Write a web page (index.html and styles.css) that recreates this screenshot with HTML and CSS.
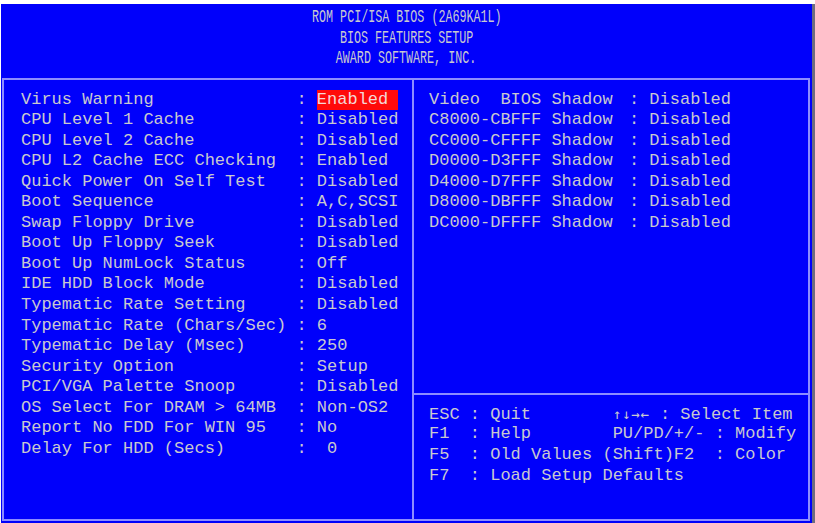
FILE: index.html
```html
<!DOCTYPE html>
<html>
<head>
<meta charset="utf-8">
<title>BIOS Features Setup</title>
<link rel="stylesheet" href="styles.css">
</head>
<body>
<div class="screen">
  <header class="title">
    <div class="tline"><span>ROM PCI/ISA BIOS (2A69KA1L)</span></div>
    <div class="tline"><span>BIOS FEATURES SETUP</span></div>
    <div class="tline"><span>AWARD SOFTWARE, INC.</span></div>
  </header>
  <div class="frame">
    <section class="left">
      <div class="row"><span class="lbl">Virus Warning</span><span class="sep">:</span><span class="val"><span class="hl">Enabled </span></span></div>
      <div class="row"><span class="lbl">CPU Level 1 Cache</span><span class="sep">:</span><span class="val">Disabled</span></div>
      <div class="row"><span class="lbl">CPU Level 2 Cache</span><span class="sep">:</span><span class="val">Disabled</span></div>
      <div class="row"><span class="lbl">CPU L2 Cache ECC Checking</span><span class="sep">:</span><span class="val">Enabled</span></div>
      <div class="row"><span class="lbl">Quick Power On Self Test</span><span class="sep">:</span><span class="val">Disabled</span></div>
      <div class="row"><span class="lbl">Boot Sequence</span><span class="sep">:</span><span class="val">A,C,SCSI</span></div>
      <div class="row"><span class="lbl">Swap Floppy Drive</span><span class="sep">:</span><span class="val">Disabled</span></div>
      <div class="row"><span class="lbl">Boot Up Floppy Seek</span><span class="sep">:</span><span class="val">Disabled</span></div>
      <div class="row"><span class="lbl">Boot Up NumLock Status</span><span class="sep">:</span><span class="val">Off</span></div>
      <div class="row"><span class="lbl">IDE HDD Block Mode</span><span class="sep">:</span><span class="val">Disabled</span></div>
      <div class="row"><span class="lbl">Typematic Rate Setting</span><span class="sep">:</span><span class="val">Disabled</span></div>
      <div class="row"><span class="lbl">Typematic Rate (Chars/Sec)</span><span class="sep">:</span><span class="val">6</span></div>
      <div class="row"><span class="lbl">Typematic Delay (Msec)</span><span class="sep">:</span><span class="val">250</span></div>
      <div class="row"><span class="lbl">Security Option</span><span class="sep">:</span><span class="val">Setup</span></div>
      <div class="row"><span class="lbl">PCI/VGA Palette Snoop</span><span class="sep">:</span><span class="val">Disabled</span></div>
      <div class="row"><span class="lbl">OS Select For DRAM &gt; 64MB</span><span class="sep">:</span><span class="val">Non-OS2</span></div>
      <div class="row"><span class="lbl">Report No FDD For WIN 95</span><span class="sep">:</span><span class="val">No</span></div>
      <div class="row"><span class="lbl">Delay For HDD (Secs)</span><span class="sep">:</span><span class="val"> 0</span></div>
    </section>
    <div class="right">
      <section class="shadow">
        <div class="row r2"><span class="lbl">Video  BIOS Shadow</span><span class="sep">:</span><span class="val">Disabled</span></div>
        <div class="row r2"><span class="lbl">C8000-CBFFF Shadow</span><span class="sep">:</span><span class="val">Disabled</span></div>
        <div class="row r2"><span class="lbl">CC000-CFFFF Shadow</span><span class="sep">:</span><span class="val">Disabled</span></div>
        <div class="row r2"><span class="lbl">D0000-D3FFF Shadow</span><span class="sep">:</span><span class="val">Disabled</span></div>
        <div class="row r2"><span class="lbl">D4000-D7FFF Shadow</span><span class="sep">:</span><span class="val">Disabled</span></div>
        <div class="row r2"><span class="lbl">D8000-DBFFF Shadow</span><span class="sep">:</span><span class="val">Disabled</span></div>
        <div class="row r2"><span class="lbl">DC000-DFFFF Shadow</span><span class="sep">:</span><span class="val">Disabled</span></div>
      </section>
      <section class="help">
        <div class="hline">ESC : Quit        <span class="arr">↑↓→←</span> : Select Item</div>
        <div class="hline">F1  : Help        PU/PD/+/- : Modify</div>
        <div class="hline">F5  : Old Values (Shift)F2  : Color</div>
        <div class="hline">F7  : Load Setup Defaults</div>
      </section>
    </div>
  </div>
</div>
</body>
</html>
```
FILE: styles.css
```css
html, body {
  margin: 0;
  padding: 0;
  background: #ffffff;
}

.screen {
  margin: 4px 0 0 1px;
  width: 811px;
  height: 519px;
  background: #0000fb;
  border-right: 3px solid #6c6c80;
  display: flex;
  flex-direction: column;
  font-family: "Liberation Mono", "DejaVu Sans Mono", monospace;
  font-size: 17px;
  color: #c9c9cf;
  overflow: hidden;
}

.title {
  height: 74px;
  padding-top: 3px;
  box-sizing: border-box;
}

.tline {
  height: 20.5px;
  line-height: 20.5px;
  text-align: center;
  white-space: pre;
  font-size: 18px;
}

.tline span {
  display: inline-block;
  transform: scaleX(0.65);
  transform-origin: center;
}

.frame {
  margin-left: 1px;
  width: 808px;
  height: 443px;
  box-sizing: border-box;
  border: 2px solid #8c8cff;
  display: grid;
  grid-template-columns: 410px 1fr;
}

.left {
  border-right: 2px solid #8c8cff;
  padding: 9.5px 0 0 17px;
}

.row {
  display: grid;
  grid-template-columns: 27ch 2ch auto;
  height: 20.56px;
  line-height: 20.56px;
  white-space: pre;
}

.row.r2 {
  grid-template-columns: 19.6ch 2ch auto;
}

.hl {
  display: inline-block;
  background: #ff0a0a;
  color: #f4d8d8;
  height: 20px;
  line-height: 20px;
}

.right {
  display: flex;
  flex-direction: column;
}

.shadow {
  height: 315px;
  box-sizing: border-box;
  border-bottom: 2px solid #8c8cff;
  padding: 9.5px 0 0 15px;
}

.help {
  flex: 1;
  padding: 8.5px 0 0 15px;
}

.hline {
  height: 20.7px;
  line-height: 20.7px;
  white-space: pre;
}

.arr {
  font-family: "DejaVu Sans Mono", monospace;
  font-size: 14px;
  letter-spacing: 0.1ch;
}
```
